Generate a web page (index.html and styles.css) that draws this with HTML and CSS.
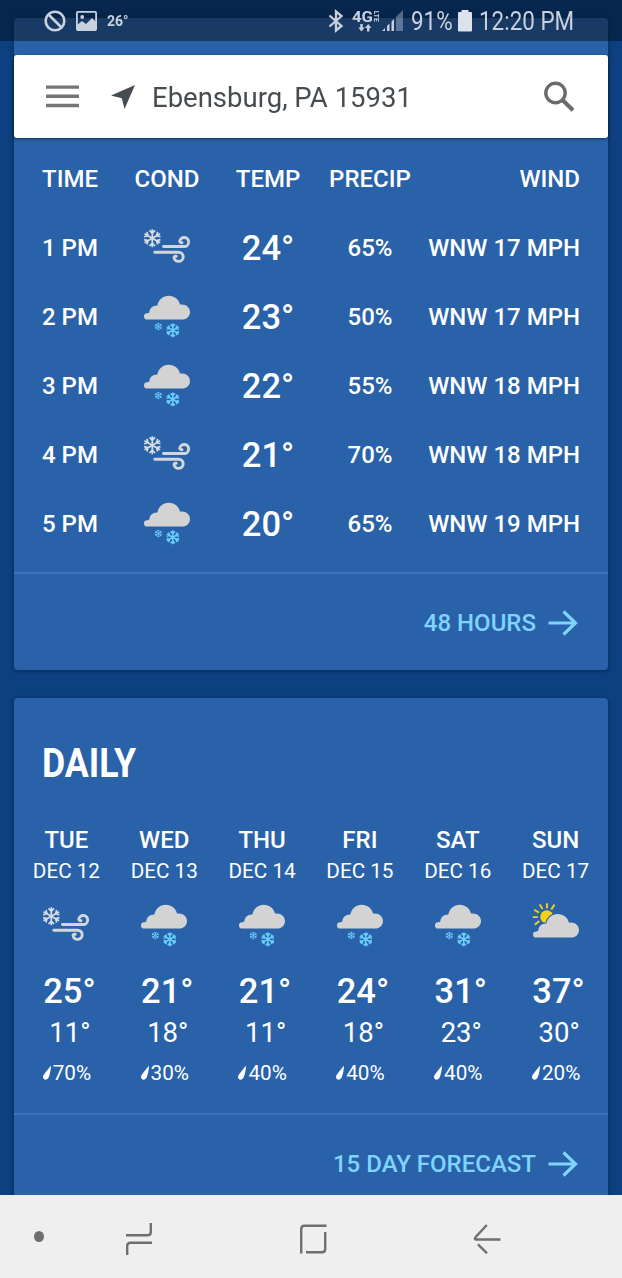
FILE: index.html
```html
<!DOCTYPE html>
<html lang="en">
<head>
    <meta charset="UTF-8">
    <meta name="viewport" content="width=device-width, initial-scale=1.0">
    <title>Weather - Ebensburg, PA</title>
    <link rel="stylesheet" href="styles.css">
</head>
<body>
    <!-- shared icons -->
    <svg class="sprite" width="0" height="0">
        <g id="flake" fill="none">
            <path id="spoke" d="M0 0V-9M-2.8 -7.8L0 -5L2.8 -7.8"/>
            <use href="#spoke" transform="rotate(60)"/>
            <use href="#spoke" transform="rotate(120)"/>
            <use href="#spoke" transform="rotate(180)"/>
            <use href="#spoke" transform="rotate(240)"/>
            <use href="#spoke" transform="rotate(300)"/>
        </g>
        <path id="cloud" d="M4.1 26.5a3.1 3.1 0 0 1 0-6.2c.9 0 1.6-.1 2.2-.7C6.5 15.2 9.5 12.3 14.4 12.4 15.5 6.8 20 2.8 25.7 2.8c5.7 0 10.2 3.6 11.3 8.8 5.5-1 10 2.5 10 7.300 0 4.300-3.400 7.600-7.700 7.600z"/>
        <symbol id="wind" viewBox="0 0 48 48">
            <use href="#flake" transform="translate(9.3 14.2)" stroke="#d9dde4" stroke-width="1.7"/>
            <path d="M20.5 22.5H41A4.5 4.5 0 1 0 36.7 17.600Q37.200 18.900 39 18.700" fill="none" stroke="#d3d6dc" stroke-width="2.900" stroke-linecap="round"/>
            <path d="M11.8 28.2H35.4A4.600 4.600 0 1 1 31 33.200Q31.500 31.900 33.200 32.200" fill="none" stroke="#d3d6dc" stroke-width="2.900" stroke-linecap="round"/>
        </symbol>
        <symbol id="snow" viewBox="0 0 48 48">
            <use href="#cloud" fill="#d3d3d3"/>
            <use href="#flake" transform="translate(15.300 33.500) scale(.42)" stroke="#69cdfb" stroke-width="2"/>
            <use href="#flake" transform="translate(29.800 37.300) scale(.76)" stroke="#69cdfb" stroke-width="2.100"/>
        </symbol>
        <symbol id="partly" viewBox="0 0 48 48">
            <circle cx="14.800" cy="14.800" r="6.600" fill="#f2d21b"/>
            <path d="M15 6.200V1.200M19.300 7.400L22.500 2.500M10.600 7L7.600 2.500M7 10.600L2.200 7.800M5.800 15.100H.800M7.300 19L2.700 22.800" stroke="#f2d21b" stroke-width="1.900"/>
            <g transform="translate(0 9.100)">
                <use href="#cloud" fill="#2962a8" stroke="#2962a8" stroke-width="2.400"/>
                <use href="#cloud" fill="#d3d3d3"/>
            </g>
        </symbol>
        <symbol id="drop" viewBox="0 0 10 16">
            <path d="M9 .5C8.900 5 8 9 6.800 12 5.800 14.500 3.600 15.200 2.100 14.200.700 13.200.800 11.400 1.700 9.800z" fill="#fff"/>
        </symbol>
        <symbol id="arrow" viewBox="0 0 30 26">
            <path d="M.5 13H27.500M15.500 1.500L27.500 13L15.500 24.500" fill="none" stroke="#7fd3ff" stroke-width="3.200"/>
        </symbol>
    </svg>

    <header class="status">
        <div class="status-left">
            <svg width="22" height="22" viewBox="0 0 22 22" fill="none" stroke="#c9d1df" stroke-width="2.6"><circle cx="11" cy="11" r="9.3"/><path d="M4.5 4.5L17.5 17.5"/></svg>
            <svg width="21" height="20" viewBox="0 0 21 20" fill="none" stroke="#c9d1df" stroke-width="1.800"><rect x=".9" y=".9" width="19.200" height="18.200" rx="1"/><path d="M1 19v-5l5-4 4 3 6-6 4 4v8z" fill="#c9d1df" stroke="none"/><circle cx="6.200" cy="6" r="1.900" fill="#c9d1df" stroke="none"/></svg>
            <span class="badge">26°</span>
        </div>
        <div class="status-right">
            <svg class="bt" width="16" height="24" viewBox="0 0 16 24" fill="none" stroke="#c9d1df" stroke-width="2.300"><path d="M1.500 6.500L13.500 17L8 21.500V2.500L13.500 7L1.500 17.500"/></svg>
            <svg class="lte" width="28" height="24" viewBox="0 0 28 24" fill="#c9d1df"><text x="0" y="12.500" class="net" textLength="21" lengthAdjust="spacingAndGlyphs">4G</text><text class="net-small" transform="translate(21.500 1.800) rotate(90)" textLength="11" lengthAdjust="spacingAndGlyphs">LTE</text><path d="M8.300 15h2.400v3.500h2l-3.200 4-3.200-4h2zM15 22.500h2.400V19h2l-3.200-4-3.200 4h2z"/></svg>
            <svg class="bars" width="22" height="22" viewBox="0 0 22 22" fill="#c9d1df"><path d="M0 21l3-3v3zM5 16l2.500-2.500V21H5zM9.500 11.500L12 9v12H9.500z"/><path d="M14 7l7-7v21h-7z" opacity=".4"/></svg>
            <span class="pct"><b>91%</b></span>
            <svg class="battery" width="14" height="22" viewBox="0 0 14 22" fill="#dce2ec"><path d="M3.500 0h7v2H13q1 0 1 1v17.500q0 1-1 1H1q-1 0-1-1V3q0-1 1-1h2.500z"/></svg>
            <span class="clock"><b>12:20 PM</b></span>
        </div>
    </header>

    <div class="search">
        <svg class="menu" width="33" height="24" viewBox="0 0 33 24" fill="#757575"><path d="M0 .4h33v3.400H0zM0 9.600h33V13H0zM0 18.800h33v3.400H0z"/></svg>
        <svg class="locate" width="26" height="26" viewBox="0 0 26 26" fill="#474c50"><path d="M25 1L14.500 25L11.800 14.200L1 11.500z"/></svg>
        <span class="place">Ebensburg, PA 15931</span>
        <svg width="32" height="32" viewBox="0 0 32 32" fill="none" stroke="#6b6b6b"><circle cx="12.500" cy="12" r="9.700" stroke-width="3.400"/><path d="M19.500 19L30 29.300" stroke-width="4"/></svg>
    </div>

    <main class="page">
        <section class="card hourly">
            <div class="hour head"><span>TIME</span><span>COND</span><span>TEMP</span><span>PRECIP</span><span class="wind">WIND</span></div>
            <div class="hour"><span>1 PM</span><svg class="icon"><use href="#wind"/></svg><span class="temp">24°</span><span>65%</span><span class="wind">WNW 17 MPH</span></div>
            <div class="hour"><span>2 PM</span><svg class="icon"><use href="#snow"/></svg><span class="temp">23°</span><span>50%</span><span class="wind">WNW 17 MPH</span></div>
            <div class="hour"><span>3 PM</span><svg class="icon"><use href="#snow"/></svg><span class="temp">22°</span><span>55%</span><span class="wind">WNW 18 MPH</span></div>
            <div class="hour"><span>4 PM</span><svg class="icon"><use href="#wind"/></svg><span class="temp">21°</span><span>70%</span><span class="wind">WNW 18 MPH</span></div>
            <div class="hour"><span>5 PM</span><svg class="icon"><use href="#snow"/></svg><span class="temp">20°</span><span>65%</span><span class="wind">WNW 19 MPH</span></div>
            <div class="more">48 HOURS <svg width="30" height="26"><use href="#arrow"/></svg></div>
        </section>

        <section class="card daily">
            <h2><span>DAILY</span></h2>
            <div class="days">
                <div class="day"><b>TUE</b><span class="date">DEC 12</span><svg class="icon"><use href="#wind"/></svg><span class="high">25°</span><span class="low">11°</span><span class="rain"><svg width="10" height="16"><use href="#drop"/></svg>70%</span></div>
                <div class="day"><b>WED</b><span class="date">DEC 13</span><svg class="icon"><use href="#snow"/></svg><span class="high">21°</span><span class="low">18°</span><span class="rain"><svg width="10" height="16"><use href="#drop"/></svg>30%</span></div>
                <div class="day"><b>THU</b><span class="date">DEC 14</span><svg class="icon"><use href="#snow"/></svg><span class="high">21°</span><span class="low">11°</span><span class="rain"><svg width="10" height="16"><use href="#drop"/></svg>40%</span></div>
                <div class="day"><b>FRI</b><span class="date">DEC 15</span><svg class="icon"><use href="#snow"/></svg><span class="high">24°</span><span class="low">18°</span><span class="rain"><svg width="10" height="16"><use href="#drop"/></svg>40%</span></div>
                <div class="day"><b>SAT</b><span class="date">DEC 16</span><svg class="icon"><use href="#snow"/></svg><span class="high">31°</span><span class="low">23°</span><span class="rain"><svg width="10" height="16"><use href="#drop"/></svg>40%</span></div>
                <div class="day"><b>SUN</b><span class="date">DEC 17</span><svg class="icon"><use href="#partly"/></svg><span class="high">37°</span><span class="low">30°</span><span class="rain"><svg width="10" height="16"><use href="#drop"/></svg>20%</span></div>
            </div>
            <div class="more">15 DAY FORECAST <svg width="30" height="26"><use href="#arrow"/></svg></div>
        </section>
    </main>

    <nav class="navbar">
        <span class="dot"></span>
        <svg class="recent" width="28" height="32" viewBox="0 0 28 32"><path d="M1 12.300H22.500Q25.800 12.300 25.800 9V0M27 19.700H5.500Q2.200 19.700 2.200 23V32"/></svg>
        <svg class="home" width="28" height="30" viewBox="0 0 28 30"><path d="M2.200 29.500V5Q2.200 1.700 5.500 1.700H27.500M26.200 8V25Q26.200 28.300 23 28.300H7"/></svg>
        <svg class="back" width="28" height="30" viewBox="0 0 28 30"><path d="M13.800 1L2.500 13.300Q1.200 15.500 2.800 15.500H27.500M5 20.300L14 29.300"/></svg>
    </nav>
</body>
</html>
```
FILE: styles.css
```css
*{
    padding: 0;
    margin: 0;
    box-sizing: border-box;
}

body{
    height: 1278px;
    overflow: hidden;
    background: #0c4080;
    font-family: Roboto, "Liberation Sans", sans-serif;
    color: #fff;
}

svg{
    display: block;
    flex: none;
}

.sprite{
    position: absolute;
}

/* status bar, drawn over the scrolled page */
.status{
    position: fixed;
    z-index: 2;
    top: 0;
    left: 0;
    width: 100%;
    height: 41px;
    padding: 0 47px 0 44px;
    display: flex;
    justify-content: space-between;
    background: rgba(0, 0, 0, .4);
    color: #c9d1df;
}

.status-left, .status-right{
    display: flex;
    align-items: center;
}

.status-left svg{
    margin-right: 10px;
}

.badge{
    font-size: 14px;
    font-weight: 700;
}

.bt{
    margin-right: 8px;
}

.lte{
    margin-right: 2px;
}

.net{
    font-size: 14px;
    font-weight: 700;
}

.net-small{
    font-size: 7px;
    font-weight: 700;
}

.bars{
    margin-right: 7px;
}

.pct, .clock{
    font-size: 25.5px;
    line-height: 41px;
    padding-top: 2px;
}

/* condensed look: squeezed regular glyphs in a fixed box */
.pct b, .clock b{
    display: block;
    font-weight: 400;
    white-space: nowrap;
    transform: scaleX(.88);
    transform-origin: left;
}

.pct{
    width: 47px;
}

.clock{
    width: 96px;
    margin-left: 7px;
}

/* search */
.search{
    position: fixed;
    z-index: 1;
    top: 55px;
    left: 14px;
    width: 594px;
    height: 83px;
    padding: 0 33px 0 32px;
    display: flex;
    align-items: center;
    background: #fff;
    border-radius: 3px;
    box-shadow: 0 1px 3px rgba(0, 0, 0, .5);
}

.locate{
    margin: 0 16px 0 31px;
}

.place{
    flex: 1;
    padding-top: 1px;
    font-size: 27.5px;
    color: #474c50;
}

/* cards */
.page{
    padding: 18px 14px 0;
}

.card{
    background: #2962a8;
    border-radius: 4px;
    box-shadow: 0 1px 5px rgba(0, 0, 0, .35);
}

.hourly{
    height: 652px;
    padding-top: 126px;
}

.hour{
    height: 69px;
    padding: 0 28px;
    display: grid;
    grid-template-columns: 76px 98px 104px 100px 160px;
    align-items: center;
    justify-items: center;
    font-size: 24px;
    font-weight: 500;
}

.hour span:first-child{
    justify-self: start;
}

.hour .wind{
    justify-self: end;
}

.hour .temp{
    font-size: 34.5px;
}

.icon{
    width: 48px;
    height: 48px;
}

.more{
    height: 98px;
    margin-top: 14px;
    padding: 1px 30px 0;
    display: flex;
    align-items: center;
    justify-content: flex-end;
    gap: 12px;
    border-top: 2px solid #3a73b8;
    font-size: 24px;
    font-weight: 500;
    color: #7fd3ff;
}

.daily{
    height: 560px;
    margin-top: 28px;
}

.daily h2{
    height: 128px;
    padding-left: 28px;
    font-size: 41.5px;
    line-height: 129px;
}

.daily h2 span{
    display: inline-block;
    transform: scaleX(.86);
    transform-origin: left;
}

.days{
    height: 273px;
    padding: 0 3.5px;
    display: grid;
    grid-template-columns: repeat(6, 1fr);
}

.day{
    display: flex;
    flex-direction: column;
    align-items: center;
}

.day b{
    font-size: 24px;
    font-weight: 500;
    line-height: 29px;
}

.date{
    font-size: 20.7px;
    line-height: 32px;
}

.day .icon{
    margin-top: 14.5px;
}

.high{
    margin-top: 21.5px;
    padding-left: 6px;
    font-size: 34.5px;
    font-weight: 500;
    line-height: 40px;
}

.low{
    padding-left: 7px;
    font-size: 27.5px;
    line-height: 43px;
}

.rain{
    margin-top: 3px;
    display: flex;
    align-items: center;
    gap: 1px;
    font-size: 20.7px;
    line-height: 32px;
}

/* system navigation */
.navbar{
    position: fixed;
    z-index: 2;
    left: 0;
    bottom: 0;
    width: 100%;
    height: 83px;
    padding: 4px 0 0 34px;
    display: flex;
    align-items: center;
    background: #efefef;
}

.navbar path{
    fill: none;
    stroke: #6f6f6f;
    stroke-width: 2.4;
}

.dot{
    width: 10px;
    height: 11px;
    margin-bottom: 4px;
    border-radius: 50%;
    background: #6f6f6f;
}

.recent{
    margin-left: 81px;
}

.home{
    margin-left: 146px;
}

.back{
    margin-left: 146px;
}
```
